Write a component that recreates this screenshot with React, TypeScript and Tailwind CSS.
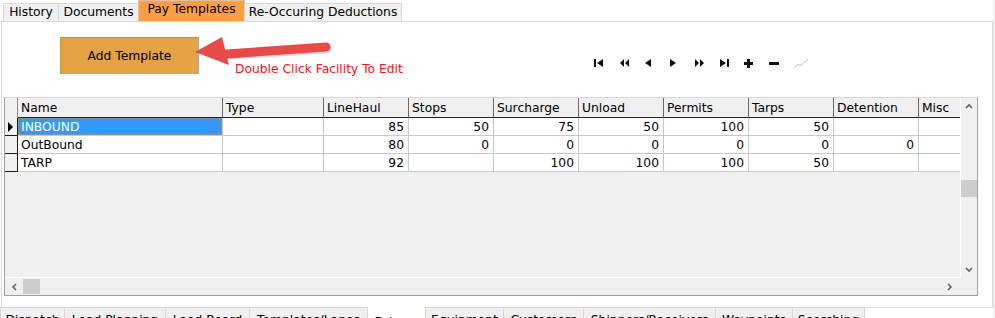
import type { ReactNode } from 'react';

const topTabs = [
  { label: 'History', w: 'w-[56px]' },
  { label: 'Documents', w: 'w-[81px]' },
  { label: 'Pay Templates', w: 'w-[107px]', active: true },
  { label: 'Re-Occuring Deductions', w: 'w-[158px]' },
];

const bottomTabs = [
  { label: 'Dispatch', w: 'w-[65px]' },
  { label: 'Load Planning', w: 'w-[102px]' },
  { label: 'Load Board', w: 'w-[85px]' },
  { label: 'Templates/Lanes', w: 'w-[119px]' },
  { label: 'Drivers', w: 'w-[59px]', active: true },
  { label: 'Equipment', w: 'w-[79px]' },
  { label: 'Customers', w: 'w-[81px]' },
  { label: 'Shippers/Receivers', w: 'w-[133px]' },
  { label: 'Waypoints', w: 'w-[78px]' },
  { label: 'Searching', w: 'w-[73px]' },
];

const columns = [
  { label: 'Name', w: 'w-[205px]', align: 'left' },
  { label: 'Type', w: 'w-[101px]', align: 'left' },
  { label: 'LineHaul', w: 'w-[85px]' },
  { label: 'Stops', w: 'w-[85px]' },
  { label: 'Surcharge', w: 'w-[85px]' },
  { label: 'Unload', w: 'w-[85px]' },
  { label: 'Permits', w: 'w-[85px]' },
  { label: 'Tarps', w: 'w-[85px]' },
  { label: 'Detention', w: 'w-[85px]' },
  { label: 'Misc', w: 'w-[41px]', last: true },
];

const rows: string[][] = [
  ['INBOUND', '', '85', '50', '75', '50', '100', '50', '', ''],
  ['OutBound', '', '80', '0', '0', '0', '0', '0', '0', ''],
  ['TARP', '', '92', '', '100', '100', '100', '50', '', ''],
];

function NavIcon({ children, w = 10 }: { children: ReactNode; w?: number }) {
  return (
    <div className="w-[25px] h-[10px] flex items-center">
      <svg width={w} height={10} viewBox={`0 0 ${w} 10`}>
        {children}
      </svg>
    </div>
  );
}

function Chevron({ dir }: { dir: 'up' | 'down' | 'left' | 'right' }) {
  const pts = {
    up: '1,5 4,2 7,5',
    down: '1,2 4,5 7,2',
    left: '5,1 2,4 5,7',
    right: '2,1 5,4 2,7',
  }[dir];
  const vertical = dir === 'up' || dir === 'down';
  return (
    <svg width={vertical ? 8 : 7} height={vertical ? 7 : 8}>
      <polyline points={pts} fill="none" stroke="#606060" strokeWidth="1.6" />
    </svg>
  );
}

export default function App() {
  return (
    <div className="relative w-[995px] h-[318px] overflow-hidden bg-white flex font-['DejaVu_Sans',sans-serif] text-[12.3px] leading-[14px] text-black">
      <div className="w-[993px] flex flex-col">
        {/* top tabs */}
        <div className="h-[21px] flex items-end pl-[3px]">
          {topTabs.map((t) => (
            <div
              key={t.label}
              className={`${t.w} border-t border-x -mr-px text-center pt-px whitespace-nowrap ${
                t.active ? 'h-[21px] bg-[#fb9e45] border-[#e2c09a]' : 'h-[18px] bg-[#f0f0f0] border-[#d9d9d9]'
              }`}
            >
              {t.label}
            </div>
          ))}
        </div>

        {/* tab panel */}
        <div className="ml-px w-[992px] h-[286px] border-t border-x border-[#d9d9d9] flex flex-col">
          <div className="h-[75px] flex items-start">
            <button className="ml-[58px] mt-[15px] w-[139px] h-[37px] bg-[#e5a244] border border-[#b8a423] border-r-[#a8a8a8] border-b-[#a8a8a8]">
              Add Template
            </button>
            <div className="ml-[36px] mt-[40px] w-[170px] text-[#ff1010] whitespace-nowrap">Double Click Facility To Edit</div>
            <div className="ml-[189px] mt-[36px] flex">
              <NavIcon>
                <rect x="0" y="1" width="2" height="8" fill="#111" />
                <polygon points="9,1 3,5 9,9" fill="#111" />
              </NavIcon>
              <NavIcon w={11}>
                <polygon points="5,1 1,5 5,9" fill="#111" />
                <polygon points="10,1 6,5 10,9" fill="#111" />
              </NavIcon>
              <NavIcon w={8}>
                <polygon points="7,1 1,5 7,9" fill="#111" />
              </NavIcon>
              <NavIcon w={8}>
                <polygon points="1,1 7,5 1,9" fill="#111" />
              </NavIcon>
              <NavIcon w={11}>
                <polygon points="1,1 5,5 1,9" fill="#111" />
                <polygon points="6,1 10,5 6,9" fill="#111" />
              </NavIcon>
              <NavIcon>
                <polygon points="1,1 7,5 1,9" fill="#111" />
                <rect x="8" y="1" width="2" height="8" fill="#111" />
              </NavIcon>
              <NavIcon w={9}>
                <rect x="3" y="1" width="3" height="9" fill="#111" />
                <rect x="0" y="4" width="9" height="3" fill="#111" />
              </NavIcon>
              <NavIcon>
                <rect x="0" y="4" width="10" height="3" fill="#111" />
              </NavIcon>
              <NavIcon w={15}>
                <polyline points="0.5,9 4,6.5 6.5,7.5 14,1" fill="none" stroke="#b8b8b8" strokeWidth="1" />
              </NavIcon>
            </div>
          </div>

          {/* grid */}
          <div className="ml-[2px] w-[974px] h-[199px] border border-[#a0a0a0] border-t-[#d6d6d6] bg-[#f0f0f0] flex flex-col">
            <div className="h-[180px] flex">
              <div className="w-[956px] h-[180px] border-r border-b border-white overflow-hidden">
                <div className="flex h-[20px] bg-[#f0f0f0]">
                  <div className="w-[13px] shrink-0 border-r border-[#8c8c8c]" />
                  {columns.map((c) => (
                    <div
                      key={c.label}
                      className={`${c.w} shrink-0 border-b border-b-[#222] pl-[3px] flex items-center whitespace-nowrap ${
                        c.last ? '' : 'border-r border-r-[#6a6a6a]'
                      }`}
                    >
                      {c.label}
                    </div>
                  ))}
                </div>
                {rows.map((r, ri) => (
                  <div key={ri} className="flex h-[18px]">
                    <div className="w-[13px] shrink-0 bg-[#f0f0f0] border-r border-b border-[#1a1a1a] flex items-center pl-[3px]">
                      {ri === 0 && (
                        <svg width="6" height="10">
                          <polygon points="0,0 5,5 0,10" fill="#000" />
                        </svg>
                      )}
                    </div>
                    {columns.map((c, ci) => {
                      const selected = ri === 0 && ci === 0;
                      return (
                        <div
                          key={c.label}
                          className={`${c.w} shrink-0 bg-white border-b border-[#c8c8c8] flex items-center ${
                            c.last ? '' : 'border-r'
                          } ${c.align === 'left' ? 'justify-start pl-[3px]' : 'justify-end pr-[4px]'}`}
                        >
                          {selected ? (
                            <div className="-ml-[3px] w-[204px] h-[17px] bg-[#3399ff] text-white border border-dotted border-[#d98a2a] pl-[2px] flex items-center">
                              {r[ci]}
                            </div>
                          ) : (
                            r[ci]
                          )}
                        </div>
                      );
                    })}
                  </div>
                ))}
              </div>
              <div className="w-[16px] h-[180px] flex flex-col items-center">
                <div className="h-[17px] flex items-center justify-center">
                  <Chevron dir="up" />
                </div>
                <div className="mt-[65px] w-[16px] h-[17px] bg-[#cdcdcd]" />
                <div className="flex-1" />
                <div className="h-[17px] flex items-center justify-center">
                  <Chevron dir="down" />
                </div>
              </div>
            </div>
            <div className="h-[17px] flex items-center">
              <div className="w-[18px] flex items-center justify-center">
                <Chevron dir="left" />
              </div>
              <div className="w-[17px] h-[15px] bg-[#cdcdcd]" />
              <div className="flex-1" />
              <div className="w-[17px] flex items-center justify-center mr-[19px]">
                <Chevron dir="right" />
              </div>
            </div>
          </div>
        </div>

        {/* bottom tabs */}
        <div className="h-[11px] border-t border-[#d9d9d9] flex items-start">
          {bottomTabs.map((t) => (
            <div
              key={t.label}
              className={`${t.w} shrink-0 border-x -mr-px text-center whitespace-nowrap overflow-hidden ${
                t.active ? '-mt-px h-[12px] bg-white border-[#d9d9d9] pt-[8px]' : 'h-[11px] bg-[#f0f0f0] border-[#d9d9d9] pt-[5px]'
              }`}
            >
              {t.label}
            </div>
          ))}
        </div>
      </div>
      <div className="w-[2px] bg-[#f0f0f0]" />

      {/* annotation arrow */}
      <svg className="absolute left-[190px] top-[32px]" width="150" height="40" viewBox="0 0 150 40">
        <line x1="38" y1="23" x2="137" y2="17" stroke="#b0b0b0" strokeOpacity="0.5" strokeWidth="9" strokeLinecap="round" />
        <line x1="36" y1="22" x2="136" y2="15" stroke="#e84a4a" strokeWidth="9" strokeLinecap="round" />
        <polygon points="5,20 32,5 39,33" fill="#e84a4a" />
      </svg>
    </div>
  );
}
